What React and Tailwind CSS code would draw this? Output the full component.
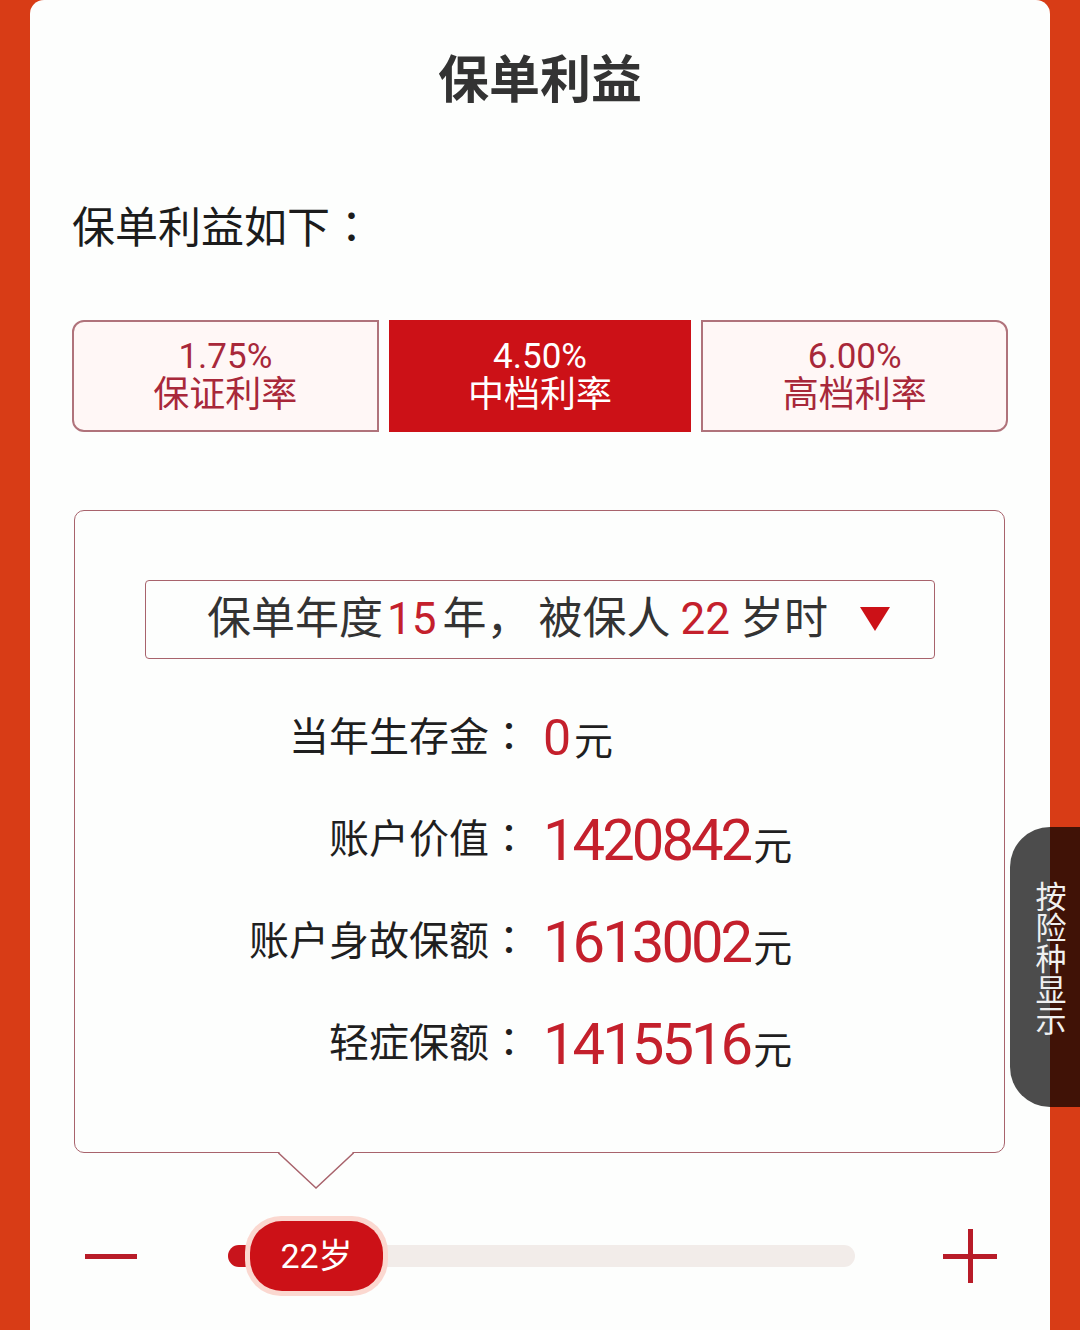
import React from 'react';

const rates = [
  { rate: '1.75%', label: '保证利率', shape: 'rounded-l-[12px]' },
  { rate: '4.50%', label: '中档利率', active: true, shape: '' },
  { rate: '6.00%', label: '高档利率', shape: 'rounded-r-[12px]' },
];

const rows = [
  { label: '当年生存金', value: '0', small: true },
  { label: '账户价值', value: '1420842' },
  { label: '账户身故保额', value: '1613002' },
  { label: '轻症保额', value: '1415516' },
];

// centred full-width colon (TC glyph), leading-0 so it doesn't stretch the line
const Colon = () => <span className="leading-[0] font-['Noto_Sans_CJK_TC',sans-serif]">：</span>;

function RateButton({ rate, label, active, shape }) {
  return (
    <button
      className={
        active
          ? 'flex-1 flex flex-col items-center justify-center bg-[#cc1117] text-white'
          : `flex-1 flex flex-col items-center justify-center bg-[#fff7f6] border-2 border-[#b0737b] text-[#a8283a] ${shape}`
      }
    >
      <span className="text-[35px] leading-[38px]">{rate}</span>
      <span className="text-[36px] leading-[38px]">{label}</span>
    </button>
  );
}

export default function App() {
  return (
    <div className="relative h-[1330px] w-full overflow-hidden bg-[#d83c16] px-[30px] font-['Roboto','Noto_Sans_CJK_SC',sans-serif]">
      <div className="h-full rounded-t-[14px] bg-[#fdfefd]">
        <div className="h-[160px] flex items-center justify-center">
          <h1 className="text-[51px] leading-none font-bold text-[#333]">保单利益</h1>
        </div>

        <p className="pl-[42px] mt-[48px] text-[43px] leading-[40px] text-[#1c1c1c]">
          保单利益如下<Colon />
        </p>

        <div className="mt-[72px] px-[42px] h-[112px] flex gap-[10px]">
          {rates.map((r) => (
            <RateButton key={r.rate} {...r} />
          ))}
        </div>

        <div className="relative mt-[78px] ml-[44px] w-[931px] h-[643px] border-[1.5px] border-[#a8636c] rounded-[10px]">
          <div className="mt-[68.5px] mx-auto w-[790px] h-[79px] border-[1.5px] border-[#a8636c] rounded-[4px] flex items-center justify-center pl-[18px] text-[44px] text-[#333]">
            <span>
              保单年度<span className="text-[#c4202c] ml-[4px] mr-[6px]">15</span>年，
              <span className="ml-[8px]">被保人</span>
              <span className="text-[#c4202c] ml-[10px] mr-[10px]">22</span>岁时
            </span>
            <svg className="ml-[32px]" width="30" height="24" viewBox="0 0 30 24">
              <polygon points="0,0 30,0 15,24" fill="#cc1117" />
            </svg>
          </div>

          <div className="mt-[28px]">
            {rows.map((row) => (
              <div key={row.label} className="h-[102px] flex items-center">
                <div className="w-[454px] text-right text-[40px] leading-[48px] text-[#1f1f1f]">
                  {row.label}
                  <Colon />
                </div>
                <div className="ml-[14px] flex items-baseline">
                  <span
                    className={
                      row.small
                        ? 'text-[50px] leading-none text-[#c4202c]'
                        : 'text-[58px] leading-none tracking-[-3px] text-[#c4202c]'
                    }
                  >
                    {row.value}
                  </span>
                  <span className="text-[39px] leading-none text-[#1f1f1f] ml-[3px]">元</span>
                </div>
              </div>
            ))}
          </div>

          <svg className="absolute left-[203px] top-[calc(100%-1px)]" width="76" height="39" viewBox="0 0 76 39">
            <polygon points="0,0 76,0 38,37" fill="#fdfefd" />
            <polyline points="0,1.5 38,37 76,1.5" fill="none" stroke="#a8636c" strokeWidth="1.5" />
          </svg>
        </div>

        <div className="mt-[63px] h-[80px] flex items-center pl-[55px]">
          <div className="w-[52px] h-[5px] bg-[#b81c28]" />
          <div className="relative ml-[91px] w-[627px] h-[22px] rounded-full bg-[#f2ece9]">
            <div className="absolute left-0 top-0 h-full w-[40px] rounded-l-full bg-[#c8141c]" />
            <div className="absolute left-[17px] top-1/2 -translate-y-1/2 w-[143px] h-[80px] rounded-[36px] bg-[#fbd8d0] p-[5px]">
              <div className="h-full w-full rounded-[32px] bg-[#cc1117] flex items-center justify-center text-white text-[34px]">
                22岁
              </div>
            </div>
          </div>
          <div className="relative ml-[88px] w-[54px] h-[54px] flex items-center justify-center">
            <div className="absolute w-[54px] h-[5px] bg-[#b81c28]" />
            <div className="absolute w-[5px] h-[54px] bg-[#b81c28]" />
          </div>
        </div>
      </div>

      <div className="absolute right-0 top-[827px] w-[70px] h-[280px] rounded-l-[40px] bg-black/70 flex items-center justify-center pl-[6px] pb-[18px]">
        <span className="[writing-mode:vertical-rl] text-[31px] leading-[31px] text-[#f0f0f0]">按险种显示</span>
      </div>
    </div>
  );
}
